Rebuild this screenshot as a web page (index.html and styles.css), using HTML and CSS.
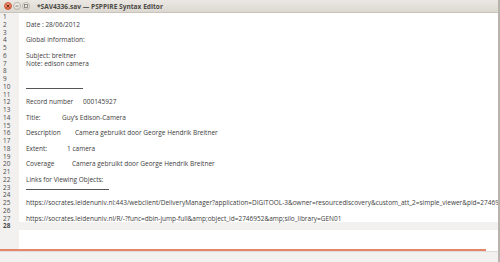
FILE: index.html
```html
<!DOCTYPE html>
<html>
<head lang="en">
    <meta charset="UTF-8">
    <title>*SAV4336.sav — PSPPIRE Syntax Editor</title>
    <link rel="stylesheet" href="styles.css">
</head>
<body>
<div id="window">
    <div id="titlebar">
        <span class="btn close"><svg width="6" height="6" viewBox="0 0 6 6"><path d="M1.5 1.5L4.5 4.5M4.5 1.5L1.5 4.5" stroke="#5a2a1a" stroke-width="0.9"/></svg></span>
        <span class="btn"><svg width="6" height="6" viewBox="0 0 6 6"><path d="M1.5 3H4.5" stroke="#7a7670" stroke-width="0.9"/></svg></span>
        <span class="btn"><svg width="6" height="6" viewBox="0 0 6 6"><rect x="1.5" y="1.5" width="3" height="3" fill="none" stroke="#7a7670" stroke-width="0.8"/></svg></span>
        <span id="title">*SAV4336.sav — PSPPIRE Syntax Editor</span>
    </div>
    <div id="editor">
        <ul id="gutter">
            <li>1</li><li>2</li><li>3</li><li>4</li><li>5</li><li>6</li><li>7</li>
            <li>8</li><li>9</li><li>10</li><li>11</li><li>12</li><li>13</li><li>14</li>
            <li>15</li><li>16</li><li>17</li><li>18</li><li>19</li><li>20</li><li>21</li>
            <li>22</li><li>23</li><li>24</li><li>25</li><li>26</li><li>27</li>
            <li class="current">28</li>
        </ul>
        <div id="text">
            <div class="line"></div>
            <div class="line">Date : 28/06/2012</div>
            <div class="line"></div>
            <div class="line">Global information:</div>
            <div class="line"></div>
            <div class="line">Subject: breitner</div>
            <div class="line">Note: edison camera</div>
            <div class="line"></div>
            <div class="line"></div>
            <div class="line"><span class="rule short"></span></div>
            <div class="line"></div>
            <div class="line"><span class="key k-record">Record number</span>000145927</div>
            <div class="line"></div>
            <div class="line"><span class="key k-title">Title:</span>Guy’s Edison-Camera</div>
            <div class="line"></div>
            <div class="line"><span class="key k-desc">Description</span>Camera gebruikt door George Hendrik Breitner</div>
            <div class="line"></div>
            <div class="line"><span class="key k-extent">Extent:</span>1 camera</div>
            <div class="line"></div>
            <div class="line"><span class="key k-cov">Coverage</span>Camera gebruikt door George Hendrik Breitner</div>
            <div class="line"></div>
            <div class="line">Links for Viewing Objects:</div>
            <div class="line"><span class="rule long"></span></div>
            <div class="line"></div>
            <div class="line">https://socrates.leidenuniv.nl:443/webclient/DeliveryManager?application=DIGITOOL-3&amp;owner=resourcediscovery&amp;custom_att_2=simple_viewer&amp;pid=2746952&amp;mode=file</div>
            <div class="line"></div>
            <div class="line">https://socrates.leidenuniv.nl/R/-?func=dbin-jump-full&amp;amp;object_id=2746952&amp;amp;silo_library=GEN01</div>
            <div class="line current"></div>
        </div>
    </div>
    <div id="hscroll"><div id="thumb"></div></div>
    <div id="status"></div>
</div>
</body>
</html>
```
FILE: styles.css
```css
*{
    margin:0;
    padding:0;
}
ul{
    list-style:none;
}
body{
    font-family:"Open Sans","DejaVu Sans",sans-serif;
    color:#3c3c3c;
    background:#f2f1f0;
}
#window{
    width:500px;
    height:262px;
    display:flex;
    flex-direction:column;
    border-right:2px solid #b8b4ad;
    box-sizing:border-box;
    overflow:hidden;
}
#titlebar{
    height:13px;
    flex:none;
    display:flex;
    align-items:center;
    padding-left:4px;
    background:linear-gradient(#ebe8e4,#dcd8d1);
    border-bottom:1px solid #c9c4bb;
    box-sizing:border-box;
}
.btn{
    width:8px;
    height:8px;
    border-radius:50%;
    background:linear-gradient(#f6f4f1,#dedad3);
    border:1px solid #b9b4ab;
    box-sizing:border-box;
    margin-right:1px;
    display:flex;
    align-items:center;
    justify-content:center;
}
.btn.close{
    background:linear-gradient(#f79877,#e9623d);
    border-color:#c9583a;
}
#title{
    margin-left:6px;
    font-weight:bold;
    font-size:6.6px;
    color:#4c4a45;
}
#editor{
    flex:1;
    display:flex;
    background:#fff;
    min-height:0;
}
#gutter{
    width:19px;
    flex:none;
    background:#f2f1f0;
    padding-left:3px;
    box-sizing:border-box;
    font-size:6.4px;
    line-height:7.75px;
    color:#4a4a4a;
}
#gutter li.current{
    font-weight:bold;
}
#text{
    flex:1;
    padding-left:7px;
    font-size:6.5px;
    line-height:7.75px;
    white-space:nowrap;
    overflow:hidden;
}
.line{
    height:7.75px;
}
.line.current{
    background:#f2f1f0;
    margin-left:-7px;
}
.key{
    display:inline-block;
}
.k-record{width:57px;}
.k-title{width:36px;}
.k-desc{width:49px;}
.k-extent{width:41px;}
.k-cov{width:46px;}
.rule{
    display:inline-block;
    height:4px;
    border-bottom:0.8px solid #555;
}
.rule.short{width:57px;}
.rule.long{width:83px;}
#hscroll{
    height:2px;
    flex:none;
    background:#fff;
    margin-top:auto;
}
#thumb{
    width:486px;
    height:2px;
    background:#e3866a;
}
#status{
    height:10px;
    flex:none;
    background:#f2f1f0;
    border-top:1px solid #e0ddd8;
}
```
